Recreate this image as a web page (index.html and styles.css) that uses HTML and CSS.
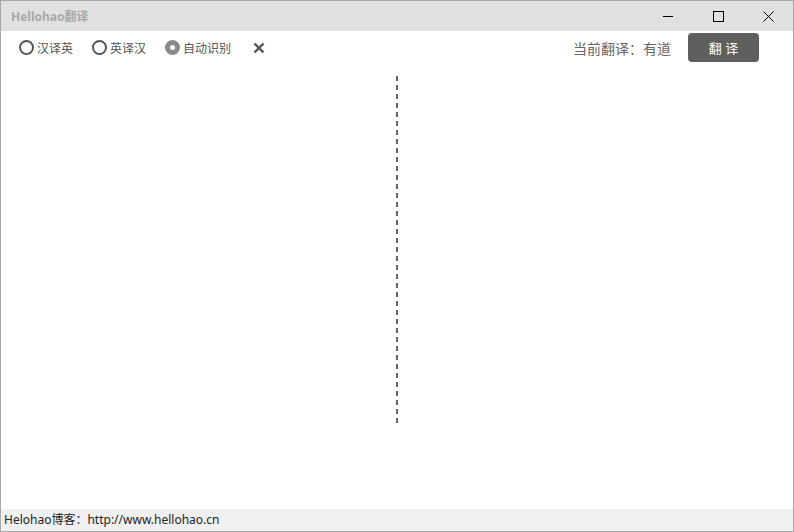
FILE: index.html
```html
<!DOCTYPE html>
<html lang="zh-CN">
<head>
    <meta charset="UTF-8">
    <meta name="viewport" content="width=device-width, initial-scale=1.0">
    <title>Hellohao翻译</title>
    <link rel="stylesheet" href="styles.css">
</head>
<body>
    <div class="window">
        <div class="titlebar">
            <span class="title">Hellohao翻译</span>
            <div class="controls">
                <span class="ctl">
                    <svg width="10" height="10" viewBox="0 0 10 10"><path d="M0 5.5H10" stroke="#000" stroke-width="1"/></svg>
                </span>
                <span class="ctl">
                    <svg width="11" height="11" viewBox="0 0 11 11"><rect x="0.5" y="0.5" width="10" height="10" fill="none" stroke="#000" stroke-width="1"/></svg>
                </span>
                <span class="ctl">
                    <svg width="11" height="11" viewBox="0 0 11 11"><path d="M0.5 0.5L10.5 10.5M10.5 0.5L0.5 10.5" stroke="#000" stroke-width="1"/></svg>
                </span>
            </div>
        </div>
        <div class="toolbar">
            <label class="radio"><span class="dot"></span>汉译英</label>
            <label class="radio"><span class="dot"></span>英译汉</label>
            <label class="radio checked"><span class="dot"></span>自动识别</label>
            <span class="clear">
                <svg width="12" height="12" viewBox="0 0 12 12"><path d="M1.5 1.5L10.5 10.5M10.5 1.5L1.5 10.5" stroke="#555" stroke-width="2.4"/></svg>
            </span>
            <div class="right">
                <span class="engine">当前翻译：有道</span>
                <button class="go">翻 译</button>
            </div>
        </div>
        <div class="main">
            <div class="divider"></div>
        </div>
        <div class="status">Helohao博客：http://www.hellohao.cn</div>
    </div>
</body>
</html>
```

FILE: styles.css
```css
* {
    margin: 0;
    padding: 0;
    box-sizing: border-box;
}
body {
    font-family: "Noto Sans", "Noto Sans CJK SC", sans-serif;
    background: #fff;
}
.window {
    width: 794px;
    height: 532px;
    border: 1px solid #a8a8a8;
    display: flex;
    flex-direction: column;
}
.titlebar {
    height: 30px;
    background: #e1e1e1;
    display: flex;
    align-items: center;
}
.title {
    padding-left: 10px;
    font-size: 12px;
    font-weight: bold;
    color: #a8a8a8;
}
.controls {
    margin-left: auto;
    display: flex;
    height: 100%;
}
.ctl {
    width: 50px;
    height: 100%;
    display: flex;
    align-items: center;
    justify-content: center;
}
.toolbar {
    height: 32px;
    display: flex;
    align-items: center;
    padding-left: 18px;
    padding-top: 1px;
    font-size: 12px;
    color: #555;
}
.radio {
    display: flex;
    align-items: center;
    width: 73px;
}
.dot {
    width: 15px;
    height: 15px;
    border: 2px solid #555;
    border-radius: 50%;
    margin-right: 3px;
}
.checked .dot {
    border: 5px solid #8a8a8a;
    background: #fff;
}
.clear {
    display: flex;
    margin-left: 15px;
}
.right {
    margin-left: auto;
    display: flex;
    align-items: center;
    padding-right: 34px;
}
.engine {
    font-size: 14px;
    color: #666;
    margin-right: 17px;
}
.go {
    width: 71px;
    height: 29px;
    border: none;
    border-radius: 4px;
    background: #5f5f5f;
    color: #fff;
    font-family: inherit;
    font-size: 13px;
}
.main {
    flex: 1;
    display: flex;
    justify-content: center;
    padding-top: 13px;
}
.divider {
    width: 2px;
    height: 348px;
    background: repeating-linear-gradient(to bottom, #666 0, #666 5px, transparent 5px, transparent 9px);
}
.status {
    height: 22px;
    background: #f0f0f0;
    font-size: 12px;
    color: #222;
    padding-left: 3px;
    line-height: 22px;
}
```
